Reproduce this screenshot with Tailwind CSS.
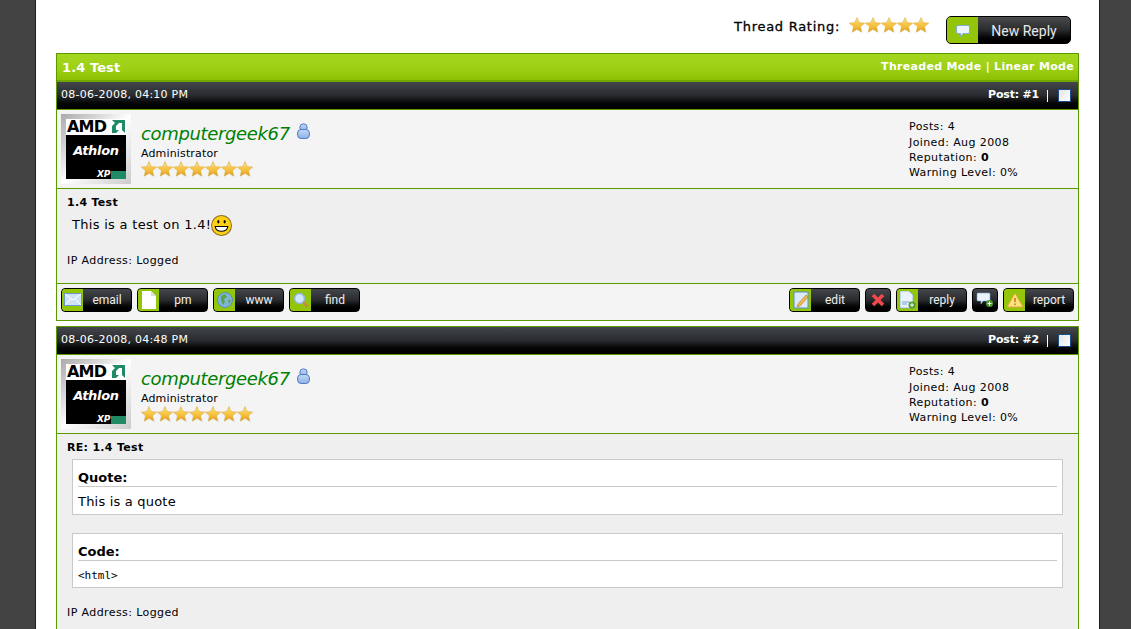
<!DOCTYPE html>
<html><head><meta charset="utf-8"><script src="https://cdn.jsdelivr.net/npm/@tailwindcss/browser@4"></script></head>
<body class="m-0 h-[629px] overflow-hidden bg-[#434343] font-['DejaVu_Sans',sans-serif] text-[11px] text-black">
<svg width="0" height="0" class="absolute"><defs>
<linearGradient id="sg" x1="0" y1="0" x2="0" y2="1"><stop offset="0" stop-color="#fde28a"/><stop offset=".55" stop-color="#f6c23e"/><stop offset="1" stop-color="#dd9a1c"/></linearGradient>
<linearGradient id="bg" x1="0" y1="0" x2="0" y2="1"><stop offset="0" stop-color="#c3d8f5"/><stop offset="1" stop-color="#8fb0e6"/></linearGradient>
<symbol id="star" viewBox="0 0 16 16"><polygon points="8,0.5 10.2,5.6 15.7,6.1 11.5,9.7 12.8,15.2 8,12.3 3.2,15.2 4.5,9.7 0.3,6.1 5.8,5.6" fill="url(#sg)" stroke="#d9a441" stroke-width=".5"/></symbol>
<symbol id="user" viewBox="0 0 13 16"><circle cx="6.500" cy="4.500" r="3.700" fill="url(#bg)" stroke="#4f7cc4"/><rect x=".6" y="6.500" width="11.800" height="9" rx="3.500" fill="url(#bg)" stroke="#4f7cc4"/></symbol>
</defs></svg>
<div class="ml-[35px] mr-[31px] h-[629px] border-x border-x-[#1f1f1f] bg-white px-5">
<div class="flex h-[53px] items-start justify-end pr-2">
 <div class="mt-[17px] flex items-start">
  <span class="pt-[2px] text-[13px] font-normal leading-4 tracking-[0.72px] [-webkit-text-stroke:0.3px_#000]">Thread Rating:</span>
  <span class="ml-[9px] flex h-4">
   <svg class="size-4"><use href="#star"/></svg><svg class="size-4"><use href="#star"/></svg><svg class="size-4"><use href="#star"/></svg><svg class="size-4"><use href="#star"/></svg><svg class="size-4"><use href="#star"/></svg>
  </span>
 </div>
 <a class="ml-[17px] mt-4 flex h-7 w-[125px] overflow-hidden rounded-[5px] border border-black bg-gradient-to-b from-[#4a4c4e] via-[#2a2b2d] to-black text-[14px] text-[#e8e8e8]">
  <span class="flex w-[31px] items-center justify-center bg-[#93c50a]"><svg class="mt-[2px]" width="14" height="12" viewBox="0 0 14 12"><path d="M2 .5h10a1.500 1.500 0 0 1 1.500 1.500v5a1.500 1.500 0 0 1-1.500 1.500H7l-2.500 3v-3H2A1.500 1.500 0 0 1 .5 7V2A1.500 1.500 0 0 1 2 .5z" fill="#eef5fc" stroke="#7fb0dc"/></svg></span>
  <span class="flex-1 pt-[4px] text-center font-['Roboto',sans-serif] leading-5">New Reply</span>
 </a>
</div>

<div class="border border-[#5a9a00]">
 <div class="flex h-[28px] items-center justify-between border-b-2 border-b-[#6fa600] bg-gradient-to-b from-[#a5d71f] via-[#9ccf14] via-60% to-[#8bbf00] pl-[5px] pr-[4px] font-bold text-white">
  <span class="pt-[1px] text-[13px] tracking-[0.1px]">1.4 Test</span>
  <span class="tracking-[0.3px]">Threaded Mode | Linear Mode</span>
 </div>
 <div class="flex h-[27px] items-center justify-between bg-gradient-to-b from-[#43474b] via-[#292b2e] to-black pl-1 pr-[7px] text-white">
  <span class="tracking-[0.25px]">08-06-2008, 04:10 PM</span>
  <span class="flex items-center"><b class="tracking-[-0.2px]">Post: #1</b><span class="ml-[8px] h-3 w-px bg-white"></span><span class="ml-[10px] block size-[13px] border border-[#1d4f86] bg-gradient-to-br from-[#e4e4e4] to-white"></span></span>
 </div>
 <div class="flex h-[80px] border-y border-y-[#5a9a00] bg-[#f4f4f4] pl-[4px]">
  <div class="mt-[4px] h-[70px] w-[70px] shrink-0 bg-gradient-to-br from-[#aaa] via-white to-[#ccc] p-[5px]">
   <div class="flex h-full flex-col bg-white">
    <div class="flex h-[15px] items-center justify-between text-[16px] font-bold leading-none tracking-[-0.8px]"><span class="pl-px">AMD</span><svg class="mr-px" width="13" height="13" viewBox="0 0 13 13"><path d="M0 0h13v13l-3-3V3H3zM0 13V6l3-3h4L4 6v4h3l-3 3z" fill="#1f8a64"/></svg></div>
    <div class="mt-px flex flex-1 flex-col bg-black pt-[10px] text-center text-[13px] font-bold italic leading-3 tracking-[-0.3px] text-white">Athlon<div class="mt-auto flex items-end justify-end text-[9px] leading-[10px]"><span class="mr-px">XP</span><span class="h-[8px] w-[15px] bg-[#1f8a64]"></span></div></div>
   </div>
  </div>
  <div class="ml-[10px] flex-1">
   <div class="mt-[12px] flex items-center leading-6"><span class="text-[18px] italic tracking-[-0.35px] text-[#008000]">computergeek67</span><svg class="ml-[7px] -mt-[6px] h-4 w-[13px]"><use href="#user"/></svg></div>
   <div class="mt-[1px] leading-[14px] tracking-[0.15px]">Administrator</div>
   <div class="flex h-4"><svg class="size-4"><use href="#star"/></svg><svg class="size-4"><use href="#star"/></svg><svg class="size-4"><use href="#star"/></svg><svg class="size-4"><use href="#star"/></svg><svg class="size-4"><use href="#star"/></svg><svg class="size-4"><use href="#star"/></svg><svg class="size-4"><use href="#star"/></svg></div>
  </div>
  <div class="w-[169px] shrink-0 pt-[9px] leading-[15px] tracking-[0.4px]">
   <div class="leading-[16px]">Posts: 4</div><div>Joined: Aug 2008</div><div>Reputation: <b>0</b></div><div>Warning Level: 0%</div>
  </div>
 </div>
 <div class="h-[94px] bg-[#efefef] pl-[10px] pt-[7px]">
  <div class="font-bold leading-[14px] tracking-[0.3px]">1.4 Test</div>
  <div class="mt-[3px] flex h-[24px] items-center pl-[5px] text-[13px] tracking-[0.3px]">This is a test on 1.4!<svg class="size-[21px]" viewBox="0 0 20 20"><circle cx="10" cy="10" r="9.500" fill="#fdd017" stroke="#8a6d1a"/><ellipse cx="7" cy="6.500" rx="1" ry="1.700"/><ellipse cx="13" cy="6.500" rx="1" ry="1.700"/><path d="M4 11c1 6 11 6 12 0z" fill="#fff" stroke="#000"/></svg></div>
  <div class="mt-[16px] leading-4 tracking-[0.4px]">IP Address: Logged</div>
 </div>
 <div class="flex h-[37px] justify-between border-t border-t-[#5a9a00] bg-[#f4f4f4] px-1 pt-1 font-['Roboto',sans-serif] text-[12px] text-[#eee]">
  <div class="flex gap-[5px]">
   <a class="flex h-6 w-[71px] overflow-hidden rounded border border-black bg-gradient-to-b from-[#43474b] via-[#292b2e] to-black"><span class="flex w-[21px] items-center justify-center bg-[#93c50a]"><svg width="18" height="14" viewBox="0 0 18 14"><rect x=".5" y=".5" width="17" height="12" fill="#cfe2f7" stroke="#6d98c9"/><path d="M1 1l8 6 8-6M1 12l6-6M17 12l-6-6" fill="none" stroke="#fff"/></svg></span><span class="flex-1 text-center leading-[22px]">email</span></a>
   <a class="flex h-6 w-[71px] overflow-hidden rounded border border-black bg-gradient-to-b from-[#43474b] via-[#292b2e] to-black"><span class="flex w-[21px] items-center justify-center bg-[#93c50a]"><svg width="16" height="18" viewBox="0 0 16 18"><path d="M1 0h9l5 5v13H1z" fill="#fff"/><path d="M10 0v5h5" fill="#ddd"/></svg></span><span class="flex-1 text-center leading-[22px]">pm</span></a>
   <a class="flex h-6 w-[71px] overflow-hidden rounded border border-black bg-gradient-to-b from-[#43474b] via-[#292b2e] to-black"><span class="flex w-[21px] items-center justify-center bg-[#93c50a]"><svg width="16" height="16" viewBox="0 0 16 16"><circle cx="8" cy="8" r="7.500" fill="#7fb6d8" stroke="#5b8fb0"/><path d="M4 4l4-2 2 3-3 2 1 3-2 3-2-5zM11 8l3 0-2 4z" fill="#5da34b"/></svg></span><span class="flex-1 text-center leading-[22px]">www</span></a>
   <a class="flex h-6 w-[71px] overflow-hidden rounded border border-black bg-gradient-to-b from-[#43474b] via-[#292b2e] to-black"><span class="flex w-[21px] items-center justify-center bg-[#93c50a]"><svg width="16" height="16" viewBox="0 0 16 16"><path d="M10 10l5 5" stroke="#c58a4a" stroke-width="2.500"/><circle cx="6.500" cy="6.500" r="5" fill="#cfe6fb" stroke="#8fb6d8" stroke-width="1.500"/></svg></span><span class="flex-1 text-center leading-[22px]">find</span></a>
  </div>
  <div class="flex gap-[5px]">
   <a class="flex h-6 w-[71px] overflow-hidden rounded border border-black bg-gradient-to-b from-[#43474b] via-[#292b2e] to-black"><span class="flex w-[21px] items-center justify-center bg-[#93c50a]"><svg width="16" height="18" viewBox="0 0 16 18"><rect x="1" y="1" width="14" height="16" fill="#dbe9f8" stroke="#5d8fc7"/><path d="M5 13l8-9 2 2-8 9-3 1z" fill="#f2b84b" stroke="#a8742a" stroke-width=".6"/></svg></span><span class="flex-1 text-center leading-[22px]">edit</span></a>
   <a class="flex h-6 w-[26px] items-center justify-center rounded border border-black bg-gradient-to-b from-[#43474b] via-[#292b2e] to-black"><svg width="14" height="14" viewBox="0 0 14 14"><path d="M2 2l10 10M12 2L2 12" stroke="#f0484c" stroke-width="3.600"/></svg></a>
   <a class="flex h-6 w-[71px] overflow-hidden rounded border border-black bg-gradient-to-b from-[#43474b] via-[#292b2e] to-black"><span class="flex w-[21px] items-center justify-center bg-[#93c50a]"><svg width="17" height="18" viewBox="0 0 17 18"><path d="M1 0h9l4 4v13H1z" fill="#eaf2fb" stroke="#7ba4cf" stroke-width=".7"/><path d="M3 11h8M3 13h5" stroke="#7ba4cf"/><circle cx="13" cy="14" r="3.500" fill="#4e9a32"/><path d="M11 14h4M13 12v4" stroke="#fff"/></svg></span><span class="flex-1 text-center leading-[22px]">reply</span></a>
   <a class="flex h-6 w-[26px] items-center justify-center rounded border border-black bg-gradient-to-b from-[#43474b] via-[#292b2e] to-black"><svg width="18" height="16" viewBox="0 0 18 16"><path d="M2 1h11a1 1 0 0 1 1 1v6a1 1 0 0 1-1 1H7l-2 3V9H2a1 1 0 0 1-1-1V2a1 1 0 0 1 1-1z" fill="#eaf2fb" stroke="#7ba4cf" stroke-width=".6"/><circle cx="13.500" cy="11.500" r="3.500" fill="#4e9a32"/><path d="M11.500 11.500h4M13.500 9.500v4" stroke="#fff"/></svg></a>
   <a class="flex h-6 w-[71px] overflow-hidden rounded border border-black bg-gradient-to-b from-[#43474b] via-[#292b2e] to-black"><span class="flex w-[21px] items-center justify-center bg-[#93c50a]"><svg width="18" height="16" viewBox="0 0 18 16"><path d="M9 1l8 14H1z" fill="#fbe27a" stroke="#e3a63a"/><path d="M9 6v4M9 11.500v1.500" stroke="#b8742a" stroke-width="1.500"/></svg></span><span class="flex-1 text-center leading-[22px]">report</span></a>
  </div>
 </div>
</div>

<div class="mt-[5px] border border-[#5a9a00]">
 <div class="flex h-[27px] items-center justify-between bg-gradient-to-b from-[#43474b] via-[#292b2e] to-black pl-1 pr-[7px] text-white">
  <span class="tracking-[0.25px]">08-06-2008, 04:48 PM</span>
  <span class="flex items-center"><b class="tracking-[-0.2px]">Post: #2</b><span class="ml-[8px] h-3 w-px bg-white"></span><span class="ml-[10px] block size-[13px] border border-[#1d4f86] bg-gradient-to-br from-[#e4e4e4] to-white"></span></span>
 </div>
 <div class="flex h-[80px] border-y border-y-[#5a9a00] bg-[#f4f4f4] pl-[4px]">
  <div class="mt-[4px] h-[70px] w-[70px] shrink-0 bg-gradient-to-br from-[#aaa] via-white to-[#ccc] p-[5px]">
   <div class="flex h-full flex-col bg-white">
    <div class="flex h-[15px] items-center justify-between text-[16px] font-bold leading-none tracking-[-0.8px]"><span class="pl-px">AMD</span><svg class="mr-px" width="13" height="13" viewBox="0 0 13 13"><path d="M0 0h13v13l-3-3V3H3zM0 13V6l3-3h4L4 6v4h3l-3 3z" fill="#1f8a64"/></svg></div>
    <div class="mt-px flex flex-1 flex-col bg-black pt-[10px] text-center text-[13px] font-bold italic leading-3 tracking-[-0.3px] text-white">Athlon<div class="mt-auto flex items-end justify-end text-[9px] leading-[10px]"><span class="mr-px">XP</span><span class="h-[8px] w-[15px] bg-[#1f8a64]"></span></div></div>
   </div>
  </div>
  <div class="ml-[10px] flex-1">
   <div class="mt-[12px] flex items-center leading-6"><span class="text-[18px] italic tracking-[-0.35px] text-[#008000]">computergeek67</span><svg class="ml-[7px] -mt-[6px] h-4 w-[13px]"><use href="#user"/></svg></div>
   <div class="mt-[1px] leading-[14px] tracking-[0.15px]">Administrator</div>
   <div class="flex h-4"><svg class="size-4"><use href="#star"/></svg><svg class="size-4"><use href="#star"/></svg><svg class="size-4"><use href="#star"/></svg><svg class="size-4"><use href="#star"/></svg><svg class="size-4"><use href="#star"/></svg><svg class="size-4"><use href="#star"/></svg><svg class="size-4"><use href="#star"/></svg></div>
  </div>
  <div class="w-[169px] shrink-0 pt-[9px] leading-[15px] tracking-[0.4px]">
   <div class="leading-[16px]">Posts: 4</div><div>Joined: Aug 2008</div><div>Reputation: <b>0</b></div><div>Warning Level: 0%</div>
  </div>
 </div>
 <div class="h-[230px] bg-[#efefef] pl-[10px] pr-[15px] pt-[7px]">
  <div class="font-bold leading-[14px] tracking-[0.3px]">RE: 1.4 Test</div>
  <div class="ml-[5px] mt-[4px] h-[56px] border border-[#c9c9c9] bg-white px-[5px] pt-[10px]">
   <div class="h-[17px] border-b border-b-[#c9c9c9] text-[13px] font-bold leading-4">Quote:</div>
   <div class="pt-[7px] text-[13px] leading-4 tracking-[0.2px]">This is a quote</div>
  </div>
  <div class="ml-[5px] mt-[18px] h-[55px] border border-[#c9c9c9] bg-white px-[5px] pt-[10px]">
   <div class="h-[17px] border-b border-b-[#c9c9c9] text-[13px] font-bold leading-4">Code:</div>
   <div class="pt-[7px] font-['DejaVu_Sans_Mono',monospace] text-[11px] leading-4">&lt;html&gt;</div>
  </div>
  <div class="mt-[17px] leading-4 tracking-[0.4px]">IP Address: Logged</div>
 </div>
</div>
</div>
</body></html>
